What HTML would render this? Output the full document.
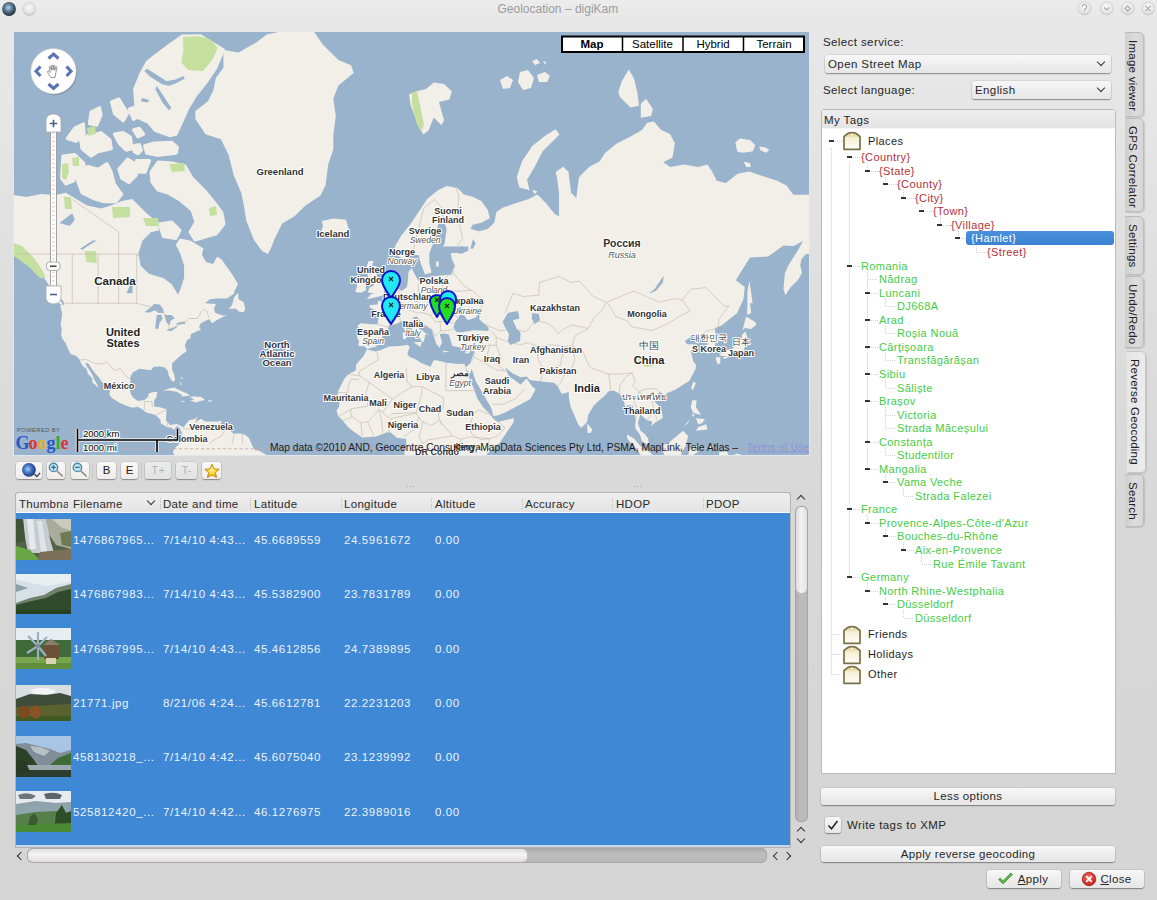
<!DOCTYPE html>
<html><head><meta charset="utf-8">
<style>
*{margin:0;padding:0;box-sizing:border-box}
html,body{width:1157px;height:900px;overflow:hidden}
body{position:relative;font-family:"Liberation Sans",sans-serif;font-size:11px;color:#222;
background:linear-gradient(180deg,#e8e8e8 0px,#e6e6e6 100px,#dedede 300px,#d8d8d8 500px,#d5d5d5 900px)}
.a{position:absolute}
.t{position:absolute;white-space:nowrap;line-height:14px;font-size:11.5px;color:#262626;letter-spacing:0.4px}
.btn{position:absolute;border-radius:3px;background:linear-gradient(#f7f7f7,#e6e6e6);box-shadow:0 1px 1.2px rgba(0,0,0,.38),0 0 0 0.5px rgba(0,0,0,.12);text-align:center;white-space:nowrap;color:#262626;font-size:11.5px;letter-spacing:0.35px}
.tbtn{position:absolute;top:462px;height:17px;border-radius:3px;background:linear-gradient(#faf8f7,#efeceb);box-shadow:0 1px 1.2px rgba(0,0,0,.35),0 0 0 0.5px rgba(0,0,0,.1);text-align:center;line-height:17px;font-size:11.5px}
.tab{position:absolute;left:1125px;width:19px;border:1px solid #bcbcbc;border-left:none;border-radius:0 5px 5px 0;background:linear-gradient(90deg,#cfcfcf,#dcdcdc 60%,#d6d6d6);box-shadow:1px 1px 1px rgba(0,0,0,.12)}
.tab span{position:absolute;left:15px;top:7px;letter-spacing:0.25px;white-space:nowrap;transform:rotate(90deg);transform-origin:0 0;font-size:11.5px;line-height:14px;color:#222}
.tt{position:absolute;white-space:nowrap;line-height:14px;font-size:11px;letter-spacing:0.4px}
.red{color:#b3303a}
.grn{color:#44cc44}
.sel{border-radius:3px;background:linear-gradient(#4a90dc,#3a82d2)}
.vl{position:absolute;width:1px;background:repeating-linear-gradient(180deg,#d2d2d2 0 1px,transparent 1px 2px)}
.hl{position:absolute;height:1px;background:repeating-linear-gradient(90deg,#d2d2d2 0 1px,transparent 1px 2px)}
.dash{position:absolute;width:5px;height:2px;background:#333}
.cell{position:absolute;color:#eef3fa;white-space:nowrap;line-height:14px;font-size:11.5px;letter-spacing:0.62px}
.th{position:absolute;top:497px;line-height:14px;white-space:nowrap;color:#2a2a2a;font-size:11.5px;letter-spacing:0.3px}
.sep{position:absolute;top:498px;width:1px;height:12px;background:repeating-linear-gradient(180deg,#bdbdbd 0 1px,transparent 1px 2px)}
.arrow{position:absolute;width:6px;height:6px;border-left:1.6px solid #333;border-bottom:1.6px solid #333}
.th1{background:linear-gradient(90deg,#5d6d55 0%,#9aa2a0 15%,#d8dcdc 30%,#7d8a84 45%,#c9cfcc 55%,#6b7a60 70%,#b5bbb0 85%,#4b5a40 100%)}
.th1::after{content:"";position:absolute;left:0;bottom:0;width:100%;height:30%;background:linear-gradient(90deg,#62a04a,#8fbf62 40%,#6b8a50 70%,#7d8d65)}
.th2{background:linear-gradient(180deg,#c9d6df 0%,#b5c6d0 35%,#8e9a8c 55%,#3f5a35 65%,#2e4a28 100%)}
.th3{background:linear-gradient(180deg,#e3edf2 0%,#e6eef0 25%,#4a7a48 30%,#557f4a 60%,#7fa25a 75%,#8db866 100%)}
.th3::after{content:"";position:absolute;left:26px;top:6px;width:16px;height:26px;background:linear-gradient(90deg,#7d8fa0,#a9b4be 40%,#6d5b42 55%,#8b6f4d)}
.th4{background:linear-gradient(180deg,#cfdbe6 0%,#e3e8ea 25%,#6f7a6a 40%,#3c4a36 60%,#7a6a3a 75%,#4e6a2a 100%)}
.th5{background:linear-gradient(180deg,#aac8e8 0%,#98b2cf 20%,#557360 40%,#2f5030 60%,#8aa0a8 78%,#3e5a3a 100%)}
.th6{background:linear-gradient(180deg,#f2f4f6 0%,#9aa0a8 20%,#c8ced2 30%,#7fa0b0 45%,#4f7a48 65%,#3d6e2e 100%)}
</style></head><body>
<!-- title bar -->
<div class="a" style="left:0;top:0;width:1157px;height:24px;background:linear-gradient(#ececec,#e7e7e7)"></div>
<svg class="a" style="left:0;top:0" width="40" height="20" viewBox="0 0 40 20">
<defs><radialGradient id="gi" cx="0.45" cy="0.4" r="0.6"><stop offset="0" stop-color="#b7d6ee"/><stop offset="0.45" stop-color="#5c7d98"/><stop offset="1" stop-color="#1c2a36"/></radialGradient>
<radialGradient id="gw" cx="0.5" cy="0.4" r="0.6"><stop offset="0" stop-color="#fafafa"/><stop offset="0.7" stop-color="#e2e2e2"/><stop offset="1" stop-color="#bdbdbd"/></radialGradient></defs>
<circle cx="9" cy="9" r="6.9" fill="url(#gi)"/>
<circle cx="29.2" cy="9" r="6.6" fill="url(#gw)" stroke="#cfcfcf" stroke-width="0.6"/>
</svg>
<div class="t" style="left:497.5px;top:2px;color:#9c9c9c;font-size:12px;letter-spacing:0">Geolocation – digiKam</div>
<svg class="a" style="left:1074px;top:0" width="83" height="20" viewBox="1074 0 83 20">
<g fill="url(#gw2)" stroke="#c9c9c9" stroke-width="0.7">
<defs><radialGradient id="gw2" cx="0.5" cy="0.35" r="0.65"><stop offset="0" stop-color="#fbfbfb"/><stop offset="0.75" stop-color="#e4e4e4"/><stop offset="1" stop-color="#c4c4c4"/></radialGradient></defs>
<circle cx="1084.4" cy="8.5" r="6.5"/><circle cx="1106.7" cy="8.5" r="6.5"/><circle cx="1127.7" cy="8.5" r="6.5"/><circle cx="1148.2" cy="8.5" r="6.5"/>
</g>
<g fill="none" stroke="#a5a5a5" stroke-width="1.1">
<path d="M1082.3,6.8a2.2,2.2 0 1 1 3,2c-0.8,0.4 -0.9,0.8 -0.9,1.6M1084.4,11.6v0.6"/>
<path d="M1104.2,7.5l2.5,2.5l2.5,-2.5"/>
<path d="M1127.7,5.8l2.6,2.7l-2.6,2.7l-2.6,-2.7z"/>
<path d="M1145.6,5.9l5.2,5.2M1150.8,5.9l-5.2,5.2"/>
</g>
</svg>

<!-- MAP -->
<div class="a" style="left:13px;top:31px;width:797px;height:425px;background:#dfe6ee"></div>
<div class="a" style="left:14px;top:32px;width:795px;height:423px;overflow:hidden;background:#99b3cc">
<svg id="map" width="795" height="423" viewBox="14 32 795 423" style="position:absolute;left:0;top:0">
<path fill="#f2efe9" stroke="#f2efe9" stroke-width="3" stroke-linejoin="round" d="M151.0,172.0L158.0,162.0L172.0,163.0L185.0,166.0L192.0,178.0L204.0,190.0L214.0,202.0L222.0,213.0L224.0,224.0L216.0,234.0L205.0,237.0L195.0,240.0L190.0,232.0L196.0,222.0L192.0,210.0L180.0,200.0L168.0,193.0L158.0,190.0L152.0,182.0Z M62.9,156.1L74.7,154.6L84.2,163.5L79.1,172.3L73.2,181.1L65.9,184.0L61.5,178.2Z M114.4,134.1L123.2,132.6L130.5,137.0L132.0,148.8L126.1,150.2L118.8,142.9Z M133.5,145.8L139.3,144.4L141.5,150.2L137.9,153.9L134.2,151.7Z M144.5,145.8L154.0,142.9L171.7,142.2L177.5,147.3L176.1,153.2L157.0,155.4L146.7,153.2Z M147.5,61.8L154.0,56.6L169.6,45.0L182.5,35.9L200.4,35.8L210.7,42.2L223.4,49.9L215.8,67.8L205.5,83.1L195.3,95.9L187.7,108.6L182.5,120.2L176.0,134.4L169.6,135.7L155.3,130.5L148.8,122.7L138.4,117.6L135.9,107.2L134.6,89.0L141.0,73.5Z M90.9,112.0L99.7,107.6L101.1,115.0L96.7,125.3L89.4,123.8Z M129.0,109.1L134.9,106.9L139.3,116.4L133.5,119.4Z M133.5,129.7L139.3,128.2L143.7,134.1L137.9,137.0Z M80.6,140.0L87.9,135.5L101.1,132.6L110.0,140.0L111.4,148.8L98.2,151.7L90.9,156.1L82.0,148.8Z M67.3,138.5L74.7,128.2L83.5,123.8L84.2,134.1L76.2,141.4Z M118.8,169.3L127.6,159.0L134.9,163.5L136.4,175.2L129.0,182.6L121.7,178.2Z M111.4,101.8L118.8,98.8L127.6,113.5L123.2,120.9L114.4,113.5Z M136.4,160.5L149.6,160.5L145.2,172.3L137.9,172.3Z M159.2,223.9L171.6,221.9L180.0,230.2L175.8,238.5L163.3,236.4Z M77.6,169.3L87.9,166.4L98.2,169.3L107.0,163.5L111.4,172.3L114.4,184.0L121.7,194.3L115.8,201.7L104.1,201.7L93.8,198.7L82.0,192.9L77.6,181.1Z"/>
<path fill="#f2efe9" d="M366.6,349.7L364.0,355.4L356.2,364.6L355.7,370.6L348.0,374.4L344.1,379.3L339.0,389.2L337.4,393.4L339.8,398.9L339.0,407.0L336.4,410.5L338.5,416.4L342.8,420.8L348.0,426.9L353.2,431.3L362.2,437.5L376.3,436.5L385.4,432.9L390.3,432.3L397.0,437.8L406.0,439.1L406.5,446.3L404.2,451.5L406.0,461.8L484.6,461.8L484.6,456.7L487.1,454.1L492.3,448.9L500.0,442.4L507.8,430.8L513.7,421.9L513.7,418.2L507.8,419.5L497.5,421.9L493.1,418.5L489.7,413.7L483.3,407.6L477.6,398.9L473.5,387.8L469.1,377.9L465.2,367.6L464.7,363.7L458.8,364.0L445.9,362.8L442.1,361.6L434.3,360.0L433.0,361.6L430.5,366.7L421.4,363.1L415.0,359.1L409.8,357.0L407.3,353.9L409.8,346.2L406.8,344.9L399.5,345.9L389.2,346.5L378.9,350.7L375.1,351.6L367.8,349.4Z M180.0,377.0L183.1,377.9L182.3,379.3Z M180.5,381.6L181.8,385.0L180.0,384.2Z M662.4,445.0L667.5,443.7L675.3,437.3L683.0,430.8L688.1,436.0L685.6,446.3L683.0,450.2L680.4,456.7L664.9,456.7L662.4,450.2Z M403.7,327.7L406.0,325.6L406.2,328.8L405.2,331.2Z M442.1,350.4L449.3,351.3L444.6,352.6Z M162.7,390.9L168.9,388.4L174.1,387.5L181.8,391.2L187.0,393.4L190.3,395.6L182.6,396.4L181.0,394.2L176.6,391.7L171.5,390.9L167.6,390.6Z M464.7,352.0L470.7,350.1L469.1,353.5L465.2,353.2Z M367.1,349.1L364.8,346.2L358.6,345.9L358.8,340.3L357.0,337.7L358.8,329.1L357.5,325.6L360.9,323.2L371.2,324.2L377.6,324.2L378.4,318.5L378.4,314.0L375.1,310.3L369.4,307.2L369.9,304.9L377.6,304.5L378.2,300.5L382.0,301.7L385.4,298.9L386.1,295.3L389.7,293.6L393.1,289.0L394.4,286.0L401.7,291.0L407.0,287.0L407.8,281.0L408.5,272.0L411.5,268.0L414.5,274.0L418.6,281.0L420.8,278.8L432.0,276.5L451.0,274.5L455.0,266.0L451.5,258.0L451.0,253.0L462.0,252.9L468.3,251.0L468.3,246.4L455.0,246.4L442.4,246.4L444.5,244.3L446.7,229.1L444.5,222.7L442.4,220.5L438.0,224.8L433.7,242.1L429.4,252.9L429.4,263.7L431.6,272.4L425.1,274.5L420.8,263.7L418.6,255.1L412.1,255.1L403.5,259.4L397.0,255.1L394.8,246.4L401.3,235.6L410.0,224.8L418.6,211.9L427.2,198.9L438.0,190.3L446.7,185.9L457.5,188.1L464.0,194.6L472.6,196.7L481.3,201.1L487.7,209.7L489.9,218.3L481.3,222.7L472.6,224.8L470.4,229.1L479.1,231.3L487.7,229.1L494.2,222.7L496.4,211.9L502.9,207.5L515.8,203.2L528.8,198.9L537.4,194.6L546.1,203.2L554.7,214.0L559.0,216.2L559.0,192.4L556.9,177.3L555.6,172.0L563.3,166.8L568.5,172.0L571.1,192.7L576.3,197.9L578.9,177.2L589.3,166.8L599.6,161.6L605.0,153.0L616.7,143.6L630.7,136.6L642.3,129.7L647.0,122.7L653.9,121.5L660.9,129.7L670.2,134.3L674.9,143.6L672.5,157.6L663.2,162.2L670.2,166.9L684.2,164.5L698.1,166.9L707.4,164.5L712.1,171.5L716.7,180.8L726.0,183.1L737.6,173.8L749.3,171.5L763.2,176.2L777.2,180.8L786.5,185.5L793.4,194.8L815.0,194.8L819.6,195.1L819.6,254.0L805.9,254.0L801.5,259.1L800.2,265.0L802.0,273.0L797.7,280.3L790.2,287.7L785.3,295.3L783.5,289.0L784.8,273.5L788.6,265.0L798.9,248.7L802.8,241.1L793.8,246.1L783.5,245.5L768.0,256.6L750.0,257.6L735.8,280.3L744.8,286.9L743.5,299.3L737.1,312.9L721.6,325.6L715.2,328.1L715.2,345.9L714.7,351.6L711.3,352.3L706.9,353.9L707.5,344.3L703.6,337.7L694.6,339.3L695.9,334.3L688.1,338.7L684.8,341.0L686.9,344.3L697.2,344.6L690.7,350.7L693.3,361.6L695.9,364.6L695.9,368.2L689.4,380.7L675.3,389.8L666.2,393.4L664.9,395.3L659.8,392.0L654.6,396.2L653.4,400.3L661.1,408.4L662.9,417.7L654.6,422.9L651.5,426.3L652.1,421.6L646.9,420.3L641.8,415.8L640.5,413.7L637.9,422.9L640.5,430.8L644.3,433.4L648.2,438.6L649.0,445.5L641.8,441.1L640.0,434.7L635.3,428.2L635.3,417.7L632.7,405.7L628.9,404.9L625.0,407.0L623.7,398.9L619.3,393.4L613.4,390.6L608.3,391.5L605.2,395.3L598.0,401.6L593.6,405.7L588.2,415.0L587.1,422.1L581.2,427.9L578.1,424.2L574.8,416.4L570.9,407.6L569.1,398.9L568.6,392.0L561.9,394.0L559.3,389.5L558.0,386.4L554.1,382.7L541.3,381.6L529.7,379.9L526.6,376.4L520.6,377.3L512.9,373.5L505.2,367.6L509.1,376.4L513.4,379.3L520.6,384.4L526.6,378.4L532.2,386.4L535.6,389.2L530.4,398.9L520.6,404.3L505.2,412.4L497.5,415.6L493.3,416.1L491.5,408.4L482.0,392.0L475.6,380.7L471.7,369.1L469.9,374.1L465.2,367.6L469.9,363.7L471.7,359.1L473.7,353.9L474.0,346.9L469.1,348.1L460.1,347.5L452.4,345.9L449.8,337.7L448.5,334.0L456.2,331.9L461.4,332.2L474.3,330.2L488.4,330.9L488.7,327.4L484.6,323.9L479.4,319.5L479.4,312.9L475.6,317.4L467.8,320.3L465.2,316.6L460.9,312.9L458.0,318.5L455.2,322.1L453.4,327.4L456.2,331.9L449.8,334.3L443.3,333.6L439.7,334.3L442.1,342.6L439.5,347.8L436.1,343.6L434.3,337.7L431.7,329.8L422.7,323.9L416.8,316.6L413.2,317.4L413.7,322.1L417.6,327.4L422.7,330.9L429.2,335.7L425.3,334.3L424.0,341.0L422.0,342.6L417.6,333.3L412.4,329.8L408.6,325.6L404.2,320.6L394.4,324.6L389.2,324.9L386.7,331.6L381.5,337.7L380.2,341.0L376.3,346.5Z M366.8,299.3L372.5,298.1L378.9,296.5L385.1,294.4L383.8,291.9L385.9,288.1L382.3,285.1L380.7,282.5L378.4,279.9L376.3,274.0L373.8,273.5L376.9,266.4L371.7,266.0L373.8,261.1L368.6,261.1L366.6,266.4L367.1,272.6L368.1,276.7L369.6,278.1L373.3,279.0L373.8,285.6L369.4,287.7L367.8,292.4L373.8,293.2L370.4,294.8Z M661.6,397.5L666.2,395.9L667.5,397.5L663.7,401.1Z M710.0,443.2L712.6,446.3L711.3,450.2L710.0,447.6Z M189.5,396.7L194.7,396.4L201.1,397.0L205.2,400.0L199.8,401.1L196.7,402.4L189.8,400.8L194.2,399.7Z M742.3,330.9L746.1,316.6L755.1,322.1L756.4,324.6L751.3,329.1L744.8,328.1Z M719.1,354.5L724.2,350.7L731.9,349.1L735.8,345.9L741.0,341.0L742.3,334.3L745.6,331.6L747.4,337.7L744.8,342.6L744.3,349.1L742.3,352.3L739.7,352.9L734.0,353.5L729.9,356.0L721.6,356.0Z M366.0,290.3L365.8,284.3L367.3,279.4L365.5,276.7L362.7,276.7L360.1,277.2L355.7,281.6L357.0,286.0L355.2,291.9L360.9,292.8Z M179.7,400.5L185.1,401.6L183.1,402.2Z M716.0,357.0L720.3,357.3L720.3,363.1L717.8,364.6L716.0,360.0Z M690.7,407.0L692.3,400.3L696.6,400.3L695.9,407.0L701.0,415.0L693.3,412.9Z M695.9,430.8L707.5,429.5L706.2,424.2L698.4,426.9Z M691.5,413.7L694.6,414.5L693.3,416.9Z M10.0,194.9L14.0,194.9L26.4,197.0L41.0,193.9L55.5,194.9L65.9,192.8L76.2,199.0L86.6,205.3L101.1,208.4L111.5,205.3L121.9,201.1L132.2,199.0L138.5,205.3L146.8,213.6L157.1,221.9L159.2,230.2L150.9,232.2L142.6,240.5L138.5,253.0L140.5,265.4L148.8,273.7L163.3,277.9L171.6,284.1L177.9,294.5L180.0,290.3L184.1,277.9L184.1,265.4L180.0,253.0L175.8,244.7L180.0,238.5L190.3,240.5L200.7,246.7L211.1,253.0L221.4,259.2L231.8,273.7L238.0,284.0L234.0,292.0L234.6,293.2L226.9,298.5L216.6,298.5L210.1,299.3L204.7,303.3L215.8,304.1L214.0,309.1L215.3,312.9L223.0,315.5L226.9,315.1L217.9,319.5L211.9,323.2L209.4,319.2L205.0,321.0L200.6,323.5L199.1,327.4L201.1,329.8L196.5,331.6L190.8,334.3L190.3,338.3L187.0,340.0L184.9,345.6L186.7,351.3L181.8,354.5L177.9,357.9L172.3,363.1L172.0,369.1L174.3,375.0L175.1,379.6L173.6,381.9L171.2,379.9L168.4,374.7L168.1,371.2L165.0,367.6L159.9,366.4L153.5,366.7L151.1,370.3L147.0,369.7L139.3,368.8L132.8,372.6L130.5,376.4L130.3,382.2L129.7,389.2L131.0,394.5L133.9,398.3L138.0,401.1L144.4,400.0L148.3,396.7L148.6,393.4L153.5,392.0L157.3,392.0L156.3,397.5L154.2,400.3L154.0,406.5L159.9,407.3L166.6,409.2L166.1,416.4L165.8,420.3L170.2,425.0L176.6,424.0L182.1,426.6L183.6,427.4L186.7,422.9L189.5,420.0L193.9,419.3L197.5,416.6L196.2,419.8L197.0,421.9L198.5,420.3L201.1,418.7L205.0,421.4L210.1,421.4L216.1,421.4L222.0,421.1L220.4,424.0L224.8,427.1L228.2,429.2L233.3,433.4L239.5,433.6L244.9,434.7L248.8,437.8L251.4,443.7L252.7,446.8L255.2,450.2L259.1,450.7L266.8,455.1L273.3,456.1L283.6,458.7L291.3,463.1L291.3,474.9L170.2,474.9L174.1,455.4L173.0,451.5L175.4,447.4L178.2,445.0L181.8,439.6L182.3,433.9L180.8,430.3L179.5,427.4L176.4,426.1L174.3,430.0L171.0,427.6L167.6,427.4L160.7,423.2L160.4,419.8L156.0,415.3L152.2,414.0L146.0,412.6L141.9,408.9L137.5,406.8L132.8,407.8L127.7,406.2L120.0,403.0L112.2,398.3L109.4,395.1L109.9,390.6L106.3,386.1L101.4,381.3L98.6,377.0L95.5,373.8L91.4,368.2L88.5,363.7L85.7,362.5L86.5,366.1L89.8,370.6L92.9,375.8L94.4,379.9L97.3,384.4L98.3,388.1L95.0,384.4L92.6,382.7L92.1,377.9L87.7,373.5L86.7,369.1L82.8,366.1L80.5,362.2L79.5,359.4L76.4,356.0L70.7,353.9L67.4,347.5L65.8,343.3L62.7,339.3L61.2,335.0L61.7,329.1L60.7,323.9L62.2,314.0L60.2,305.6L64.3,304.9L63.3,300.9L59.1,298.1L53.0,294.0L51.2,288.6L46.5,281.6L43.9,278.1L40.1,271.2L36.5,264.0L31.3,259.1L26.2,261.1L21.3,255.5L18.2,254.0L7.9,254.0L7.9,195.1Z M228.7,308.7L232.0,305.3L234.1,297.3L238.2,292.8L238.5,299.3L243.6,302.1L245.4,309.1L243.4,312.2L238.5,311.4L236.4,308.7Z M719.1,452.3L726.8,451.2L729.4,456.7L737.1,453.6L744.8,455.6L755.1,460.5L768.0,461.8L768.0,461.8L719.1,461.8Z M683.5,426.9L689.4,419.5L688.1,422.9Z M208.3,400.3L212.5,400.5L211.9,401.6L208.3,401.6Z M747.4,314.8L751.3,312.9L750.0,303.3L752.6,303.3L749.5,280.8L747.4,291.1L747.4,303.3L747.1,312.9Z M402.6,332.6L406.8,332.6L406.2,339.0L403.1,339.3Z M722.9,357.6L728.6,355.4L727.3,357.9L724.2,359.1Z M413.5,342.3L421.7,341.7L420.4,346.9Z M587.1,423.5L592.5,429.5L590.7,432.9L587.6,432.9Z M689.4,448.9L692.0,446.3L703.6,445.0L693.3,447.6L698.4,451.5L694.6,454.1L690.7,456.7L688.1,456.7Z M627.1,434.4L634.0,438.6L640.5,446.3L649.0,451.5L654.6,456.7L641.8,456.7L636.6,448.9L627.1,438.6Z M691.2,387.8L693.3,381.6L695.9,382.7L692.8,390.6Z M532.2,189.8L537.4,191.3L534.8,194.3Z M50.9,296.1L59.4,299.3L63.5,305.6L59.9,304.1L54.2,299.3Z M695.9,418.2L704.9,419.0L702.3,422.9L698.4,424.2Z M500.0,80.0L507.0,76.0L513.0,80.0L510.0,88.0L503.0,89.0Z M520.0,72.0L528.0,70.0L534.0,78.0L531.0,88.0L523.0,90.0L518.0,82.0Z M537.0,75.0L545.0,72.0L550.0,76.0L547.0,82.0L539.0,82.0Z M532.0,61.0L537.0,59.0L540.0,63.0L535.0,65.0Z M543.0,61.0L546.0,62.0L545.0,65.0Z M436.0,262.0L438.5,261.0L438.5,267.0L436.0,266.0Z M223.4,49.9L238.7,52.4L256.6,42.2L266.8,34.6L287.3,30.0L312.8,30.0L323.0,44.8L338.4,60.1L351.1,65.2L353.7,72.9L338.4,85.6L333.3,98.4L335.8,116.3L333.3,134.2L333.3,149.5L328.1,164.8L325.6,185.3L320.5,195.5L305.2,205.7L294.9,215.9L282.2,223.6L275.0,238.0L271.0,248.0L268.0,254.0L262.0,251.0L254.0,240.0L246.4,221.0L243.9,205.7L241.3,192.9L233.6,175.0L228.5,154.6L220.9,139.3L205.5,134.2L195.3,118.8L195.3,111.2L208.1,101.0L213.2,90.7L215.8,78.0L223.4,67.8L223.4,57.5Z M321.8,221.0L333.3,218.5L346.0,219.7L348.6,228.7L343.5,236.3L328.1,237.6L320.5,233.8L323.0,226.1Z M516.7,177.2L521.9,161.6L532.2,146.1L545.2,135.7L555.6,129.2L559.5,134.4L553.0,140.9L542.6,151.3L534.8,166.8L527.0,179.8L529.6,190.2L519.3,187.6Z M735.3,142.5L739.8,138.6L750.1,139.9L755.3,145.1L752.7,151.5L742.4,152.8L737.3,151.5Z M759.2,146.4L765.6,147.6L769.5,150.2L765.6,152.8L760.5,150.2Z M743.7,161.8L750.1,163.1L750.8,167.0L746.3,167.0Z M618.3,91.9L621.7,81.5L628.7,69.4L633.8,78.0L637.3,91.9L639.0,105.7L630.4,107.4L620.0,97.0Z M640.8,104.0L646.0,98.8L652.9,109.1L651.1,116.1L640.8,117.8Z M409.1,94.2L415.6,91.6L425.9,89.0L433.7,82.6L444.1,83.9L451.9,91.6L449.3,99.4L438.9,102.0L444.1,120.2L441.5,125.3L433.7,117.6L428.5,130.5L423.3,134.4L418.2,125.3L410.4,104.6Z"/>
<path fill="#99b3cc" d="M532.2,312.9L538.7,314.0L540.0,320.3L534.8,323.9L531.7,318.5Z M649.5,292.8L654.6,289.0L663.7,275.8L662.9,282.5L655.9,291.1L650.0,293.2Z M502.6,322.1L507.8,312.9L518.1,311.0L519.4,318.5L512.9,320.3L516.8,329.1L520.6,332.6L520.1,341.0L510.3,344.9L507.8,341.0L509.1,334.3L505.2,327.4Z M166.6,330.2L172.8,328.1L177.9,326.0L176.6,327.4L171.5,330.9L167.6,330.9Z M59.4,222.9L72.3,213.2L74.9,219.7L69.7,225.9Z M80.0,248.7L92.9,240.6L96.8,240.6L87.7,246.1L82.6,249.8Z M163.8,315.1L171.5,315.1L174.8,318.5L171.0,320.3L169.4,325.6L166.3,322.1L165.0,317.0Z M458.8,254.0L461.4,246.1L466.5,248.7L464.0,253.0Z M155.3,329.1L156.0,320.3L156.8,315.1L161.2,314.8L162.5,318.5L159.1,323.9L158.6,328.4Z M470.4,248.7L473.0,238.9L475.6,243.3L473.0,248.7Z M175.9,324.6L185.1,323.9L184.9,321.4L180.5,322.1L176.6,323.2Z M144.2,312.2L150.9,307.2L154.0,304.1L159.9,304.5L163.0,309.1L163.8,312.9L158.6,312.9L154.7,310.3L149.6,312.5Z M126.4,293.2L130.3,284.7L129.0,282.5L132.8,283.4L132.3,293.2Z M203,249L213,247.5L217.5,256L213,264L206,262L202,255Z M146.9,68.7L156.7,74.8L166.4,80.9L175,79.7L183.5,76L184.8,78.4L176.2,83.3L168.9,85.8L162.8,84.5L156.7,80.9L149.3,76L144.4,71.1Z M156.7,85.8L166.4,100.4L171.3,107.8L168.9,110.2L162.8,102.9L155.4,89.4Z M142,98L149,100L148,102.5L141,101.5Z"/>
<g fill="#c5df9f">
<path d="M182.9,36.9L198.2,36.3L210.4,39.3L217.8,47.9L212.9,58.9L203.1,71.1L188.4,69.9L181.1,62.6L183.5,50.3Z"/>
<path d="M62,164L68,163L69,172L66,180L62,178Z"/>
<path d="M72,158L79,157L79,166L73,166Z"/>
<path d="M169,164L184,163L185,171L172,172Z"/>
<path d="M112,207L130,207L130,217L113,218Z"/>
<path d="M143,218L158,218L159,226L146,226Z"/>
<path d="M64,197L71,197L72,209L65,209Z"/>
<path d="M85,251L96,251L97,263L86,262Z"/>
<path d="M14,243L22,246L34,258L42,270L46,278L40,278L28,266L14,256Z"/>
<path d="M412,92L417,92L420,105L424,125L421,132L416,122L412,104Z"/>
<path d="M637,359L650,360L654,366L645,367Z"/>
<path d="M87,128L95,126L96,134L88,136Z"/>
<path d="M209,208L216,206L217,215L210,216Z"/>
</g>
<g fill="none" stroke="#bdb6ab" stroke-width="0.7" opacity="0.85"><path d="M64.6,303.3L136.7,303.3L152.2,307.2L163.8,312.9L168.9,318.5L168.9,329.1L177.9,325.6L185.7,322.1L189.0,318.5L197.3,318.5L201.1,312.2L203.7,309.5L206.8,311.0L208.9,317.7 M79.8,360.0L85.9,359.4L95.5,363.7L102.7,363.7L107.1,362.2L112.2,368.5L116.1,370.6L120.0,368.2L125.1,375.0L131.0,379.6 M72.3,254.0L72.3,303.3 M98.1,254.0L98.1,303.3 M118.7,254.0L118.7,303.3 M136.7,254.0L136.7,303.3 M18.2,254.0L138.0,254.0 M118.7,254.0L118.7,231.9L72.3,199.4 M136.7,254.0L152.2,269.8 M144.4,409.7L144.4,401.6L152.2,401.6L152.2,407.0 M167.1,409.7L161.2,412.4L156.0,415.0 M167.6,426.9L167.6,420.3 M182.6,428.7L196.0,429.5L196.0,417.7 M226.9,426.9L221.7,436.0L216.6,438.6L208.9,443.7 M234.6,433.4L232.0,443.7 M242.4,434.7L242.4,443.7 M376.9,324.2L389.7,327.7 M387.9,294.8L392.3,299.7L397.5,301.3L402.6,303.3L401.1,308.7L397.0,314.0L399.5,316.6L400.8,322.8 M397.0,285.1L400.1,293.2L397.0,296.1L397.5,301.3 M403.7,278.5L406.0,279.0 M418.1,283.0L419.1,295.3L412.7,298.1L417.1,304.1L415.0,309.1L406.2,309.1 M442.1,281.6L443.3,291.1L440.0,302.9L430.5,301.3L425.3,304.5L420.2,303.3L412.7,298.1 M425.3,304.5L425.3,308.0L422.7,312.9L416.8,312.9L412.4,311.0L406.2,309.1 M422.7,312.9L430.5,315.1L440.3,307.2L448.5,307.2L454.2,314.8L458.0,317.4 M430.5,315.1L435.6,322.1L440.0,321.4L455.2,323.2 M440.0,321.4L440.8,330.9L450.0,330.2L453.7,329.1 M431.5,329.1L434.3,333.3L435.1,336.0L440.8,330.9 M422.7,323.9L431.5,329.1 M412.4,259.1L413.7,248.7L417.6,231.9L424.0,207.9L434.3,199.4 M443.3,221.0L442.3,207.9L434.3,199.4 M453.7,251.4L462.7,238.3L457.5,216.5L458.8,195.8L454.9,185.1 M452.4,266.4L453.7,273.5L464.0,286.0L471.7,290.3L484.6,300.9L479.9,309.9 M442.1,281.6L448.5,274.9L453.7,273.5 M443.3,291.1L461.4,291.1L471.7,290.3 M474.3,346.5L489.7,345.2L496.2,345.2L496.2,337.0L491.0,330.9 M484.6,323.9L500.0,330.9L507.8,329.8 M505.2,312.9L512.9,293.2L523.2,296.5L538.7,295.3L539.5,282.5L559.3,276.3L570.9,282.5L579.4,281.2L592.8,296.1L606.2,302.5 M606.2,302.5L618.6,297.3L634.0,291.1L649.5,298.1L659.8,302.1L675.3,298.5L682.2,300.1 M607.7,302.9L616.0,316.6L627.6,321.0L631.4,326.7L652.1,330.5L668.8,323.2L677.8,317.0L690.2,311.0L682.2,300.1 M682.2,300.1L690.7,289.0L706.2,287.7L724.2,306.0L728.9,306.0L719.1,318.8L718.0,327.7 M701.8,336.0L706.2,330.9L713.9,329.1L718.0,327.7 M707.5,343.3L713.9,341.0 M606.2,302.5L601.8,311.0L594.1,317.4L588.2,328.4L574.8,336.0L572.2,345.9L582.5,350.7L586.4,360.0L590.2,367.6L608.3,374.1L618.6,374.1L632.2,372.9L635.3,382.2L632.7,385.6L639.2,392.0L643.0,389.8L646.9,388.9L655.9,388.7L659.8,392.0 M516.8,329.8L525.8,331.6L536.1,319.9L538.7,321.4L547.7,323.2L551.6,326.0L558.0,333.6L564.5,328.4L572.2,324.9L588.2,328.4 M496.2,337.0L505.2,341.0L520.4,344.9L528.4,342.6L538.7,347.2L538.7,352.3L537.4,357.0L540.7,365.2L544.6,369.1L540.2,381.6 M538.7,347.2L549.0,344.9L556.7,345.2L565.7,346.5L572.2,345.9 M564.5,349.1L561.9,357.0L560.6,364.6L552.9,367.9L544.6,369.1 M572.2,345.9L574.8,360.0L572.2,367.6L564.5,373.5L561.9,380.7L558.0,385.9 M608.3,374.1L609.5,379.3L610.8,390.6 M619.3,393.4L619.9,385.0L626.3,376.4L632.2,372.9 M639.2,392.0L634.0,401.6L636.6,408.4L635.3,422.9 M639.2,392.0L652.1,401.6L654.6,412.4L657.2,420.3 M646.9,420.3L653.4,411.8L645.6,412.4L640.5,413.7 M482.0,361.6L496.2,370.0L504.4,370.6 M474.3,357.0L482.0,361.6L487.1,355.4L489.7,345.2 M492.3,404.3L502.6,404.3L515.5,398.9L524.5,388.7 M506.5,372.0L497.5,364.6L501.3,358.5L496.2,345.2 M376.9,352.3L378.4,360.0L372.5,363.1L359.1,371.5L359.1,375.6 M359.1,375.6L369.1,382.2L366.0,392.6L367.8,406.2L351.9,408.6L350.1,410.8 M348.0,374.4L359.1,375.6 M337.7,392.6L348.0,392.6L348.0,387.8L350.6,379.3L359.1,379.3 M406.0,367.0L407.3,382.2L412.4,386.4 M445.9,362.8L445.9,390.6 M445.9,390.6L476.6,390.6 M443.3,396.2L443.3,408.4L439.5,412.4L438.2,415.8L442.1,425.6 M422.5,386.7L443.3,397.5 M412.4,386.4L422.5,386.7L421.4,394.8L416.3,412.4L391.8,413.7L387.9,417.7L382.8,412.4L392.3,398.9L412.4,386.4 M392.3,398.9L369.1,382.2 M350.1,410.8L352.1,416.9L360.9,422.9L367.6,421.6L369.9,419.8L378.9,409.7L382.8,412.4 M388.5,432.3L390.8,418.5L416.5,413.2L418.9,417.7L412.4,430.8L403.7,436.5 M475.6,411.6L479.2,410.0L492.3,415.8L505.2,428.2L497.5,436.0L489.7,438.6L480.7,439.6L472.5,434.7L469.1,426.9L473.2,415.8L475.6,411.6 M418.9,417.7L422.7,421.6L430.5,425.6L439.5,420.6L452.4,436.0L461.4,439.3L469.1,437.0L489.5,438.6 M422.7,421.6L421.4,429.5L418.9,436.0L422.7,443.7L427.9,439.9L452.4,436.0 M487.1,453.3L489.5,438.6 M457.5,452.8L461.4,439.3 M360.9,422.9L362.2,436.0 M367.6,421.6L373.8,436.0 M378.9,409.7L381.5,420.3L382.8,432.9 M385.4,432.9L388.5,432.3 M351.9,408.6L339.0,416.4 M342.8,420.8L352.1,416.9 M469.9,363.7L473.0,358.5L474.3,357.0L474.0,346.9"/></g>
<g font-family="Liberation Sans, sans-serif" text-anchor="middle" stroke="#fff" stroke-width="2" stroke-linejoin="round" paint-order="stroke" fill="#222">
<text x="280" y="175" font-size="9.5" font-weight="bold" fill="#333">Greenland</text>
<text x="333" y="237" font-size="9.5" font-weight="bold" fill="#333">Iceland</text>
<text x="115" y="285" font-size="11.5" font-weight="bold">Canada</text>
<text x="123" y="336" font-size="11" font-weight="bold">United</text>
<text x="123" y="347" font-size="11" font-weight="bold">States</text>
<text x="119" y="389" font-size="9" font-weight="bold" fill="#333">México</text>
<text x="277" y="348" font-size="9.5" font-weight="bold" fill="#334">North</text>
<text x="277" y="357" font-size="9.5" font-weight="bold" fill="#334">Atlantic</text>
<text x="277" y="366" font-size="9.5" font-weight="bold" fill="#334">Ocean</text>
<text x="448" y="214" font-size="9" font-weight="bold" fill="#333">Suomi</text>
<text x="448" y="223" font-size="9" font-weight="bold" fill="#333">Finland</text>
<text x="425" y="234" font-size="9" font-weight="bold" fill="#333">Sverige</text>
<text x="425" y="243" font-size="8.5" font-style="italic" fill="#555">Sweden</text>
<text x="402" y="255" font-size="9" font-weight="bold" fill="#333">Norge</text>
<text x="402" y="264" font-size="8.5" font-style="italic" fill="#555">Norway</text>
<text x="371" y="273" font-size="9" font-weight="bold" fill="#333">United</text>
<text x="370" y="283" font-size="9" font-weight="bold" fill="#333">Kingdom</text>
<text x="410" y="300" font-size="9" font-weight="bold" fill="#333">Deutschland</text>
<text x="410" y="309" font-size="8.5" font-style="italic" fill="#555">Germany</text>
<text x="434" y="284" font-size="9" font-weight="bold" fill="#333">Polska</text>
<text x="434" y="293" font-size="8.5" font-style="italic" fill="#555">Poland</text>
<text x="386" y="317" font-size="9" font-weight="bold" fill="#333">France</text>
<text x="373" y="335" font-size="9" font-weight="bold" fill="#333">España</text>
<text x="373" y="344" font-size="8.5" font-style="italic" fill="#555">Spain</text>
<text x="413" y="327" font-size="9" font-weight="bold" fill="#333">Italia</text>
<text x="413" y="336" font-size="8.5" font-style="italic" fill="#555">Italy</text>
<text x="467" y="304" font-size="9" font-weight="bold" fill="#333">Україна</text>
<text x="467" y="314" font-size="8.5" font-style="italic" fill="#555">Ukraine</text>
<text x="473" y="341" font-size="9" font-weight="bold" fill="#333">Türkiye</text>
<text x="473" y="350" font-size="8.5" font-style="italic" fill="#555">Turkey</text>
<text x="622" y="247" font-size="10.5" font-weight="bold" fill="#333">Россия</text>
<text x="622" y="258" font-size="9" font-style="italic" fill="#555">Russia</text>
<text x="555" y="311" font-size="9" font-weight="bold" fill="#333">Kazakhstan</text>
<text x="647" y="317" font-size="9" font-weight="bold" fill="#333">Mongolia</text>
<text x="649" y="349" font-size="10" fill="#444">中国</text>
<text x="649" y="364" font-size="11" font-weight="bold" fill="#222">China</text>
<text x="709" y="341" font-size="8.5" fill="#444">대한민국</text>
<text x="709" y="352" font-size="9" font-weight="bold" fill="#333">S Korea</text>
<text x="741" y="345" font-size="8.5" fill="#444">日本</text>
<text x="741" y="356" font-size="9" font-weight="bold" fill="#333">Japan</text>
<text x="389" y="378" font-size="9" font-weight="bold" fill="#333">Algeria</text>
<text x="428" y="380" font-size="9" font-weight="bold" fill="#333">Libya</text>
<text x="460" y="376" font-size="9" font-weight="bold" fill="#333">مصر</text>
<text x="460" y="386" font-size="8.5" font-style="italic" fill="#555">Egypt</text>
<text x="492" y="362" font-size="9" font-weight="bold" fill="#333">Iraq</text>
<text x="521" y="363" font-size="9" font-weight="bold" fill="#333">Iran</text>
<text x="556" y="353" font-size="9" font-weight="bold" fill="#333">Afghanistan</text>
<text x="558" y="374" font-size="9" font-weight="bold" fill="#333">Pakistan</text>
<text x="497" y="384" font-size="9" font-weight="bold" fill="#333">Saudi</text>
<text x="497" y="394" font-size="9" font-weight="bold" fill="#333">Arabia</text>
<text x="587" y="392" font-size="11" font-weight="bold" fill="#222">India</text>
<text x="644" y="400" font-size="8.5" fill="#444">ประเทศไทย</text>
<text x="642" y="414" font-size="9" font-weight="bold" fill="#333">Thailand</text>
<text x="346" y="401" font-size="9" font-weight="bold" fill="#333">Mauritania</text>
<text x="378" y="406" font-size="9" font-weight="bold" fill="#333">Mali</text>
<text x="405" y="408" font-size="9" font-weight="bold" fill="#333">Niger</text>
<text x="430" y="412" font-size="9" font-weight="bold" fill="#333">Chad</text>
<text x="460" y="416" font-size="9" font-weight="bold" fill="#333">Sudan</text>
<text x="403" y="428" font-size="9" font-weight="bold" fill="#333">Nigeria</text>
<text x="483" y="430" font-size="9" font-weight="bold" fill="#333">Ethiopia</text>
<text x="211" y="430" font-size="9" font-weight="bold" fill="#333">Venezuela</text>
<text x="187" y="441.5" font-size="9" font-weight="bold" fill="#333">Colombia</text>
<text x="437" y="455" font-size="9" font-weight="bold" fill="#333">DR Congo</text>
<text x="467" y="450" font-size="9" font-weight="bold" fill="#333">Kenya</text>
</g>
<path d="M14,448.8H809" stroke="#c9a9a9" stroke-width="0.9" stroke-dasharray="3,2.5"/>
<!-- markers -->
<g stroke="#0a14c8" stroke-width="2" stroke-linejoin="round">
<path fill="#21e8f5" d="M391,298 C386,290 382,286 382,280 A9,9 0 0 1 400,280 C400,286 396,290 391,298Z"/>
<path fill="#21e8f5" d="M391,324 C386,316 382,312 382,306 A9,9 0 0 1 400,306 C400,312 396,316 391,324Z"/>
<path fill="#22dd22" d="M437,317 C432,309 430,305 430,300 A7.5,7.5 0 0 1 444,300 C444,305 442,309 437,317Z"/>
<path fill="#21e8f5" d="M448,318 C443,310 440,306 440,299 A8,8 0 0 1 456,299 C456,306 453,310 448,318Z"/>
<path fill="#22dd22" d="M447,324 C442,316 439,312 439,306 A8,8 0 0 1 455,306 C455,312 452,316 447,324Z"/>
</g>
<g stroke="#222" stroke-width="1.1">
<path d="M389,277L393,281M393,277L389,281"/>
<path d="M389,303L393,307M393,303L389,307"/>
<path d="M435,298L439,302M439,298L435,302"/>
<path d="M445,304L449,308M449,304L445,308"/>
</g>
<!-- map type buttons -->
<g font-family="Liberation Sans, sans-serif" font-size="11.5" text-anchor="middle" fill="#000">
<rect x="562" y="36.5" width="242" height="15.5" fill="#fff" stroke="#000" stroke-width="2"/>
<path d="M622.5,36.5V52M683,36.5V52M743.5,36.5V52" stroke="#000" stroke-width="1.5"/>
<text x="592" y="48" font-weight="bold">Map</text>
<text x="652.5" y="48">Satellite</text>
<text x="713" y="48">Hybrid</text>
<text x="774" y="48">Terrain</text>
</g>
<!-- pan control -->
<circle cx="54.5" cy="72.5" r="22.7" fill="#000" opacity="0.18"/>
<circle cx="53.5" cy="71.3" r="22.7" fill="#fff" stroke="#c8c8c8" stroke-width="0.6"/>
<g fill="none" stroke="#5d74b2" stroke-width="3.1" stroke-linejoin="miter">
<path d="M48.5,58.5L53.5,54L58.5,58.5"/>
<path d="M48.5,84L53.5,88.5L58.5,84"/>
<path d="M40.5,66.5L36,71.3L40.5,76"/>
<path d="M66.5,66.5L71,71.3L66.5,76"/>
</g>
<path d="M51,77.5C49.5,75.5 48,73.5 47.6,71.8C47.4,71 48.4,70.6 49,71.3L50.2,72.6L49.3,67.4C49.1,66.5 50.3,66.1 50.6,67L51.6,70.3L51.3,65.8C51.3,64.9 52.6,64.8 52.7,65.7L53.2,70L53.6,65.9C53.7,65 54.9,65.1 54.9,66L54.7,70.3L55.7,67.2C56,66.4 57.1,66.7 56.9,67.6L55.9,72.5C55.6,74.5 55.5,76 55,77.5Z" fill="#fff" stroke="#555" stroke-width="0.6"/>
<!-- zoom slider -->
<rect x="50.5" y="131" width="6" height="158" fill="#fff" stroke="#9a9a9a" stroke-width="0.9"/>
<path d="M52.5,133.0h2M52.5,137.3h2M52.5,141.7h2M52.5,146.1h2M52.5,150.4h2M52.5,154.8h2M52.5,159.1h2M52.5,163.4h2M52.5,167.8h2M52.5,172.2h2M52.5,176.5h2M52.5,180.8h2M52.5,185.2h2M52.5,189.6h2M52.5,193.9h2M52.5,198.2h2M52.5,202.6h2M52.5,206.9h2M52.5,211.3h2M52.5,215.6h2M52.5,220.0h2M52.5,224.3h2M52.5,228.7h2M52.5,233.1h2M52.5,237.4h2M52.5,241.8h2M52.5,246.1h2M52.5,250.4h2M52.5,254.8h2M52.5,259.1h2M52.5,263.5h2M52.5,267.9h2M52.5,272.2h2M52.5,276.5h2M52.5,280.9h2M52.5,285.2h2" stroke="#b0b0b0" stroke-width="0.8"/>
<path d="M46,132V120A7.5,6 0 0 1 61,120V132Z" fill="#fff" stroke="#aaa" stroke-width="0.8"/>
<path d="M49.8,123.5h7.4M53.5,119.8v7.4" stroke="#4f5d80" stroke-width="1.6"/>
<rect x="46.5" y="262" width="13.5" height="8.5" rx="3" fill="#fff" stroke="#999" stroke-width="0.8"/>
<path d="M50,266.2h6.5" stroke="#444" stroke-width="1.5"/>
<path d="M46,286V298A7.5,6 0 0 0 61,298V286Z" fill="#fff" stroke="#aaa" stroke-width="0.8"/>
<path d="M50,294.5h7" stroke="#4f5d80" stroke-width="1.6"/>
<!-- google logo -->
<text x="17" y="432" font-family="Liberation Sans, sans-serif" font-size="5.8" fill="#555" letter-spacing="0.4">POWERED BY</text>
<g font-family="Liberation Serif, serif" font-size="18" font-weight="bold">
<text x="15.5" y="449" fill="#2a57c8">G</text><text x="28.5" y="449" fill="#d33">o</text><text x="37.5" y="449" fill="#e5b02a">o</text><text x="46.5" y="449" fill="#2a57c8">g</text><text x="55.5" y="449" fill="#3a3">l</text><text x="60.5" y="449" fill="#d33">e</text>
</g>
<!-- scale -->
<g stroke="#fff" stroke-width="3.5" opacity="0.8"><path d="M77.5,429V452M77.5,440H178M177.5,429V440M157,440V452"/></g>
<g stroke="#000" stroke-width="1.6"><path d="M77.5,429V452M77.5,440H178M177.5,429V440M157,440V452"/></g>
<g font-family="Liberation Sans, sans-serif" font-size="9.5" fill="#000" stroke="#fff" stroke-width="2" paint-order="stroke">
<text x="83" y="436.5">2000 km</text>
<text x="83" y="451">1000 mi</text>
<text x="270" y="450.5" font-size="10.5" textLength="468" lengthAdjust="spacingAndGlyphs" stroke="none" fill="#1a1a1a">Map data ©2010 AND, Geocentre Consulting, MapData Sciences Pty Ltd, PSMA, MapLink, Tele Atlas –</text>
<text x="747" y="450.5" font-size="10" textLength="62" stroke="none" fill="#8f92d8" text-decoration="underline">Terms of Use</text>
</g>

</svg>
</div>

<!-- toolbar -->
<div class="tbtn" style="left:16px;width:26px"></div>
<svg class="a" style="left:16px;top:460px" width="28" height="22" viewBox="16 460 28 22">
<defs><radialGradient id="glb" cx="0.42" cy="0.45" r="0.6"><stop offset="0" stop-color="#a9d0f5"/><stop offset="0.45" stop-color="#4a78c8"/><stop offset="1" stop-color="#13307a"/></radialGradient></defs>
<circle cx="28.9" cy="469.8" r="6.9" fill="url(#glb)"/>
<path d="M34.5,474l2.3,2.6l3.3,-3.8" fill="none" stroke="#333" stroke-width="1.2"/>
</svg>
<div class="tbtn" style="left:47px;width:18px"></div>
<div class="tbtn" style="left:71px;width:18px"></div>
<svg class="a" style="left:46px;top:460px" width="46" height="22" viewBox="46 460 46 22">
<g fill="#bfe0ee" stroke="#4b8aa8" stroke-width="1.4"><circle cx="53.5" cy="467.4" r="4.2"/><circle cx="77.4" cy="467.4" r="4.2"/></g>
<g stroke="#888" stroke-width="1.6" stroke-linecap="round"><path d="M57,471L62.3,476M80.9,471L86.2,476"/></g>
<g stroke="#2d6a8a" stroke-width="1.3"><path d="M51.3,467.4h4.4M53.5,465.2v4.4M75.2,467.4h4.4"/></g>
</svg>
<div class="a" style="left:92px;top:463px;width:1px;height:16px;background:#c8c8c8"></div>
<div class="tbtn" style="left:97px;width:19px;color:#222">B</div>
<div class="tbtn" style="left:121px;width:17px;color:#222">E</div>
<div class="a" style="left:141px;top:463px;width:1px;height:16px;background:#c8c8c8"></div>
<div class="tbtn" style="left:145px;width:26px;color:#b4b4b4;background:linear-gradient(#ececec,#e2e2e2)">T+</div>
<div class="tbtn" style="left:176px;width:21px;color:#b4b4b4;background:linear-gradient(#ececec,#e2e2e2)">T-</div>
<div class="tbtn" style="left:202px;width:19px"></div>
<svg class="a" style="left:202px;top:462px" width="20" height="18" viewBox="0 0 20 18">
<defs><radialGradient id="st" cx="0.5" cy="0.45" r="0.6"><stop offset="0" stop-color="#fff6a0"/><stop offset="0.6" stop-color="#f2c418"/><stop offset="1" stop-color="#d89a10"/></radialGradient></defs>
<path d="M10,2.2L12.2,6.8L17.2,7.3L13.4,10.6L14.6,15.5L10,13L5.4,15.5L6.6,10.6L2.8,7.3L7.8,6.8Z" fill="url(#st)" stroke="#b8860b" stroke-width="0.8" stroke-linejoin="round"/>
</svg>
<!-- splitter dots -->
<div class="a" style="left:407px;top:486px;width:7px;height:1px;background:repeating-linear-gradient(90deg,#aaa 0 1px,transparent 1px 3px)"></div>
<div class="a" style="left:634px;top:486px;width:7px;height:1px;background:repeating-linear-gradient(90deg,#aaa 0 1px,transparent 1px 3px)"></div>
<div class="a" style="left:813px;top:668px;width:1px;height:9px;background:repeating-linear-gradient(180deg,#bbb 0 1px,transparent 1px 3px)"></div>
<div class="a" style="left:1140px;top:486px;width:7px;height:1px;background:repeating-linear-gradient(90deg,#bbb 0 1px,transparent 1px 3px)"></div>

<!-- table -->
<div class="a" style="left:15px;top:492px;width:776px;height:356px;border:1px solid #b4b4b4;border-radius:3px 3px 0 0;background:#3e88d5;overflow:hidden;box-shadow:inset 0 -2px 0 #c6d8ee">
  <div class="a" style="left:0;top:0;width:776px;height:20px;background:linear-gradient(#eeeeee,#e4e4e4);border-bottom:1px solid #fbfbfb"></div>
</div>
<div class="th" style="left:19px;width:49px;overflow:hidden">Thumbna</div>
<div class="th" style="left:73px">Filename</div>
<div class="arrow" style="left:148px;top:498px;transform:rotate(-45deg)"></div>
<div class="th" style="left:163px">Date and time</div>
<div class="th" style="left:254px">Latitude</div>
<div class="th" style="left:344px">Longitude</div>
<div class="th" style="left:435px">Altitude</div>
<div class="th" style="left:525px">Accuracy</div>
<div class="th" style="left:616px">HDOP</div>
<div class="th" style="left:706px">PDOP</div>
<div class="sep" style="left:160px"></div><div class="sep" style="left:250px"></div><div class="sep" style="left:341px"></div>
<div class="sep" style="left:431px"></div><div class="sep" style="left:522px"></div><div class="sep" style="left:612px"></div><div class="sep" style="left:703px"></div>
<div class="cell" style="left:73px;top:533px">1476867965...</div>
<div class="cell" style="left:163px;top:533px">7/14/10 4:43...</div>
<div class="cell" style="left:254px;top:533px">45.6689559</div>
<div class="cell" style="left:344px;top:533px">24.5961672</div>
<div class="cell" style="left:435px;top:533px">0.00</div>
<svg class="a" style="left:16px;top:519px" width="55" height="41" viewBox="0 0 55 41" preserveAspectRatio="none"><rect width="55" height="41" fill="#55624a"/><path d="M30,0H55V30L40,26L32,14Z" fill="#a9ab9c"/><path d="M36,0H55V12L45,8Z" fill="#c9cabe"/><path d="M7,0H30L34,20L38,34H12L9,18Z" fill="#c7ccd0"/><path d="M11,0H17L20,30H14Z" fill="#e6eaee"/><path d="M21,2H26L31,33H25Z" fill="#dfe4e8"/><path d="M0,27L14,31L24,41H0Z" fill="#69a646"/><path d="M24,33L55,30V41H22Z" fill="#7d7058"/><path d="M0,0H7L9,22L0,24Z" fill="#3f5537"/><path d="M44,14L55,12V28L46,26Z" fill="#6d7a55"/></svg>
<div class="cell" style="left:73px;top:587px">1476867983...</div>
<div class="cell" style="left:163px;top:587px">7/14/10 4:43...</div>
<div class="cell" style="left:254px;top:587px">45.5382900</div>
<div class="cell" style="left:344px;top:587px">23.7831789</div>
<div class="cell" style="left:435px;top:587px">0.00</div>
<svg class="a" style="left:16px;top:574px" width="55" height="40" viewBox="0 0 55 40" preserveAspectRatio="none"><rect width="55" height="40" fill="#d6e0e6"/><path d="M0,0H55V8L30,12L0,6Z" fill="#e9eef1"/><path d="M0,10L12,14L0,18Z" fill="#8e9ea6"/><path d="M0,29L14,24L28,21L40,14L55,10V40H0Z" fill="#6f806c"/><path d="M0,31L16,27L30,24L42,18L55,15V40H0Z" fill="#2f4b2c"/><path d="M0,36H55V40H0Z" fill="#27401f"/></svg>
<div class="cell" style="left:73px;top:642px">1476867995...</div>
<div class="cell" style="left:163px;top:642px">7/14/10 4:43...</div>
<div class="cell" style="left:254px;top:642px">45.4612856</div>
<div class="cell" style="left:344px;top:642px">24.7389895</div>
<div class="cell" style="left:435px;top:642px">0.00</div>
<svg class="a" style="left:16px;top:628px" width="55" height="41" viewBox="0 0 55 41" preserveAspectRatio="none"><rect width="55" height="41" fill="#e6eef2"/><path d="M0,12H55V31H0Z" fill="#3f6a3a"/><path d="M0,29H55V41H0Z" fill="#78a64e"/><path d="M0,35H55V41H0Z" fill="#5f8f3c"/><path d="M28,17L35,13L43,17V31H28Z" fill="#6b5136"/><path d="M27,17L35,11L44,17Z" fill="#8b7f70"/><rect x="30" y="30" width="10" height="6" fill="#d9d2b4"/><g stroke="#9fb0c2" stroke-width="2.2"><path d="M22,18L22,4M22,18L31,9M22,18L12,8M22,18L11,25M22,18L30,28M22,18L22,32"/></g><circle cx="22" cy="18" r="2" fill="#7a8a9a"/></svg>
<div class="cell" style="left:73px;top:696px">21771.jpg</div>
<div class="cell" style="left:163px;top:696px">8/21/06 4:24...</div>
<div class="cell" style="left:254px;top:696px">45.6612781</div>
<div class="cell" style="left:344px;top:696px">22.2231203</div>
<div class="cell" style="left:435px;top:696px">0.00</div>
<svg class="a" style="left:16px;top:685px" width="55" height="36" viewBox="0 0 55 36" preserveAspectRatio="none"><rect width="55" height="36" fill="#d9dee1"/><path d="M14,5Q28,0 40,6L36,9L18,9Z" fill="#f2f3f4"/><path d="M0,14L14,9L30,10L44,8L55,11V26H0Z" fill="#3e4c3a"/><path d="M0,22L55,19V36H0Z" fill="#5a6330"/><path d="M0,31H55V36H0Z" fill="#3f5a22"/><ellipse cx="8" cy="27" rx="6" ry="6.5" fill="#7c4a20"/><ellipse cx="19.5" cy="27" rx="5.5" ry="6.5" fill="#8a5426"/></svg>
<div class="cell" style="left:73px;top:750px">458130218_...</div>
<div class="cell" style="left:163px;top:750px">7/14/10 4:42...</div>
<div class="cell" style="left:254px;top:750px">45.6075040</div>
<div class="cell" style="left:344px;top:750px">23.1239992</div>
<div class="cell" style="left:435px;top:750px">0.00</div>
<svg class="a" style="left:16px;top:736px" width="55" height="41" viewBox="0 0 55 41" preserveAspectRatio="none"><rect width="55" height="41" fill="#a9c5e4"/><path d="M0,8L10,7L22,10L34,13L44,17L55,14V30H0Z" fill="#7f8e98"/><path d="M14,10L24,11L34,15L28,20L18,16Z" fill="#b9c0c6"/><path d="M0,10L10,14L18,24L22,30H0Z" fill="#2b4229"/><path d="M33,30L42,22L55,17V30Z" fill="#3e6b36"/><path d="M0,29H55V35H0Z" fill="#9ea9af"/><path d="M0,34H55V41H0Z" fill="#2d3d2d"/><path d="M0,24L10,26L14,36L0,36Z" fill="#263a24"/></svg>
<div class="cell" style="left:73px;top:805px">525812420_...</div>
<div class="cell" style="left:163px;top:805px">7/14/10 4:42...</div>
<div class="cell" style="left:254px;top:805px">46.1276975</div>
<div class="cell" style="left:344px;top:805px">22.3989016</div>
<div class="cell" style="left:435px;top:805px">0.00</div>
<svg class="a" style="left:16px;top:791px" width="55" height="41" viewBox="0 0 55 41" preserveAspectRatio="none"><rect width="55" height="41" fill="#8fa1aa"/><path d="M0,0H55V11L40,12L20,10L0,13Z" fill="#e7eaee"/><path d="M2,4Q12,0 20,5L16,8L4,8Z" fill="#6f757d"/><path d="M28,3Q38,0 46,4L44,8L30,8Z" fill="#5f656d"/><path d="M0,15L55,13V22L0,25Z" fill="#8fa4ac"/><path d="M0,24L20,21L40,20L55,22V41H0Z" fill="#55804a"/><path d="M40,22L46,14L50,22L55,20V41H38Z" fill="#2e4e2a"/><path d="M0,34L55,32V41H0Z" fill="#4a8a34"/><path d="M14,26L18,22L22,28L20,34H12Z" fill="#3a5a30"/></svg>
<!-- v scrollbar -->
<div class="arrow" style="left:798px;top:496px;transform:rotate(135deg)"></div>
<div class="a" style="left:795px;top:506px;width:13px;height:316px;border-radius:6px;background:linear-gradient(90deg,#a9a9a9,#bdbdbd 40%,#b9b9b9);box-shadow:inset 0 0 0 1px #a5a5a5"></div>
<div class="a" style="left:796px;top:507px;width:11px;height:86px;border-radius:5px;background:linear-gradient(90deg,#dcdcdc,#f3f1f1 45%,#e2e0e0)"></div>
<div class="arrow" style="left:798px;top:828px;transform:rotate(135deg)"></div>
<div class="arrow" style="left:798px;top:836px;transform:rotate(-45deg)"></div>
<!-- h scrollbar -->
<div class="arrow" style="left:18px;top:853px;transform:rotate(45deg)"></div>
<div class="a" style="left:27px;top:848px;width:740px;height:15px;border-radius:6px;background:linear-gradient(180deg,#a9a9a9,#bdbdbd 40%,#b9b9b9);box-shadow:inset 0 0 0 1px #a8a8a8"></div>
<div class="a" style="left:28px;top:849px;width:499px;height:13px;border-radius:5px;background:linear-gradient(180deg,#e0e0e0,#f5f4f4 45%,#dedcdc)"></div>
<div class="arrow" style="left:774px;top:853px;transform:rotate(45deg)"></div>
<div class="arrow" style="left:784px;top:853px;transform:rotate(-135deg)"></div>

<!-- right panel -->
<div class="t" style="left:823px;top:35px">Select service:</div>
<div class="btn" style="left:825px;top:55px;width:286px;height:18px;text-align:left"><span class="t" style="left:3px;top:2px">Open Street Map</span></div>
<div class="arrow" style="left:1098px;top:59px;transform:rotate(-45deg)"></div>
<div class="t" style="left:823px;top:83px">Select language:</div>
<div class="btn" style="left:972px;top:81px;width:139px;height:18px;text-align:left"><span class="t" style="left:3px;top:2px">English</span></div>
<div class="arrow" style="left:1098px;top:85px;transform:rotate(-45deg)"></div>

<div class="a" style="left:821px;top:109px;width:295px;height:665px;background:#fff;border:1px solid #bababa;border-radius:3px 3px 0 0"></div>
<div class="a" style="left:822px;top:110px;width:293px;height:19px;background:linear-gradient(#eeeeee,#e4e4e4);border-bottom:1px solid #f6f6f6"></div>
<div class="t" style="left:824px;top:113px">My Tags</div>
<div class="vl" style="left:831px;top:148px;height:526px"></div>
<div class="vl" style="left:849px;top:163px;height:414px"></div>
<div class="vl" style="left:867px;top:163px;height:8px"></div>
<div class="vl" style="left:885px;top:177px;height:7px"></div>
<div class="vl" style="left:903px;top:190px;height:8px"></div>
<div class="vl" style="left:921px;top:204px;height:7px"></div>
<div class="vl" style="left:940px;top:217px;height:8px"></div>
<div class="vl" style="left:958px;top:231px;height:7px"></div>
<div class="vl" style="left:976px;top:244px;height:8px"></div>
<div class="vl" style="left:867px;top:272px;height:197px"></div>
<div class="vl" style="left:885px;top:299px;height:7px"></div>
<div class="vl" style="left:885px;top:326px;height:7px"></div>
<div class="vl" style="left:885px;top:353px;height:7px"></div>
<div class="vl" style="left:885px;top:380px;height:8px"></div>
<div class="vl" style="left:885px;top:407px;height:21px"></div>
<div class="vl" style="left:885px;top:448px;height:7px"></div>
<div class="vl" style="left:885px;top:475px;height:7px"></div>
<div class="vl" style="left:903px;top:488px;height:8px"></div>
<div class="vl" style="left:867px;top:515px;height:8px"></div>
<div class="vl" style="left:885px;top:529px;height:7px"></div>
<div class="vl" style="left:903px;top:542px;height:8px"></div>
<div class="vl" style="left:921px;top:556px;height:8px"></div>
<div class="vl" style="left:867px;top:583px;height:8px"></div>
<div class="vl" style="left:885px;top:597px;height:7px"></div>
<div class="vl" style="left:903px;top:610px;height:8px"></div>
<div class="dash" style="left:847px;top:156px"></div>
<div class="hl" style="left:853px;top:157px;width:7px"></div>
<div class="tt red" style="left:861px;top:150px">{Country}</div>
<div class="dash" style="left:865px;top:170px"></div>
<div class="hl" style="left:871px;top:171px;width:7px"></div>
<div class="tt red" style="left:879px;top:164px">{State}</div>
<div class="dash" style="left:883px;top:183px"></div>
<div class="hl" style="left:889px;top:184px;width:7px"></div>
<div class="tt red" style="left:897px;top:177px">{County}</div>
<div class="dash" style="left:901px;top:197px"></div>
<div class="hl" style="left:907px;top:198px;width:7px"></div>
<div class="tt red" style="left:915px;top:191px">{City}</div>
<div class="dash" style="left:919px;top:210px"></div>
<div class="hl" style="left:925px;top:211px;width:7px"></div>
<div class="tt red" style="left:933px;top:204px">{Town}</div>
<div class="dash" style="left:937px;top:224px"></div>
<div class="hl" style="left:943px;top:225px;width:7px"></div>
<div class="tt red" style="left:951px;top:218px">{Village}</div>
<div class="dash" style="left:955px;top:237px"></div>
<div class="hl" style="left:961px;top:238px;width:7px"></div>
<div class="a sel" style="left:966px;top:231px;width:148px;height:14px"></div>
<div class="tt" style="left:971px;top:231px;color:#fff">{Hamlet}</div>
<div class="hl" style="left:976px;top:252px;width:10px"></div>
<div class="tt red" style="left:987px;top:245px">{Street}</div>
<div class="dash" style="left:847px;top:265px"></div>
<div class="hl" style="left:853px;top:266px;width:7px"></div>
<div class="tt grn" style="left:861px;top:259px">Romania</div>
<div class="hl" style="left:868px;top:279px;width:10px"></div>
<div class="tt grn" style="left:879px;top:272px">Nădrag</div>
<div class="dash" style="left:865px;top:292px"></div>
<div class="hl" style="left:871px;top:293px;width:7px"></div>
<div class="tt grn" style="left:879px;top:286px">Luncani</div>
<div class="hl" style="left:886px;top:306px;width:10px"></div>
<div class="tt grn" style="left:897px;top:299px">DJ668A</div>
<div class="dash" style="left:865px;top:319px"></div>
<div class="hl" style="left:871px;top:320px;width:7px"></div>
<div class="tt grn" style="left:879px;top:313px">Arad</div>
<div class="hl" style="left:886px;top:333px;width:10px"></div>
<div class="tt grn" style="left:897px;top:326px">Roșia Nouă</div>
<div class="dash" style="left:865px;top:346px"></div>
<div class="hl" style="left:871px;top:347px;width:7px"></div>
<div class="tt grn" style="left:879px;top:340px">Cârțișoara</div>
<div class="hl" style="left:886px;top:360px;width:10px"></div>
<div class="tt grn" style="left:897px;top:353px">Transfăgărășan</div>
<div class="dash" style="left:865px;top:373px"></div>
<div class="hl" style="left:871px;top:374px;width:7px"></div>
<div class="tt grn" style="left:879px;top:367px">Sibiu</div>
<div class="hl" style="left:886px;top:388px;width:10px"></div>
<div class="tt grn" style="left:897px;top:381px">Săliște</div>
<div class="dash" style="left:865px;top:400px"></div>
<div class="hl" style="left:871px;top:401px;width:7px"></div>
<div class="tt grn" style="left:879px;top:394px">Brașov</div>
<div class="hl" style="left:886px;top:415px;width:10px"></div>
<div class="tt grn" style="left:897px;top:408px">Victoria</div>
<div class="hl" style="left:886px;top:428px;width:10px"></div>
<div class="tt grn" style="left:897px;top:421px">Strada Măceșului</div>
<div class="dash" style="left:865px;top:441px"></div>
<div class="hl" style="left:871px;top:442px;width:7px"></div>
<div class="tt grn" style="left:879px;top:435px">Constanța</div>
<div class="hl" style="left:886px;top:455px;width:10px"></div>
<div class="tt grn" style="left:897px;top:448px">Studentilor</div>
<div class="dash" style="left:865px;top:468px"></div>
<div class="hl" style="left:871px;top:469px;width:7px"></div>
<div class="tt grn" style="left:879px;top:462px">Mangalia</div>
<div class="dash" style="left:883px;top:481px"></div>
<div class="hl" style="left:889px;top:482px;width:7px"></div>
<div class="tt grn" style="left:897px;top:475px">Vama Veche</div>
<div class="hl" style="left:904px;top:496px;width:10px"></div>
<div class="tt grn" style="left:915px;top:489px">Strada Falezei</div>
<div class="dash" style="left:847px;top:508px"></div>
<div class="hl" style="left:853px;top:509px;width:7px"></div>
<div class="tt grn" style="left:861px;top:502px">France</div>
<div class="dash" style="left:865px;top:522px"></div>
<div class="hl" style="left:871px;top:523px;width:7px"></div>
<div class="tt grn" style="left:879px;top:516px">Provence-Alpes-Côte-d'Azur</div>
<div class="dash" style="left:883px;top:535px"></div>
<div class="hl" style="left:889px;top:536px;width:7px"></div>
<div class="tt grn" style="left:897px;top:529px">Bouches-du-Rhône</div>
<div class="dash" style="left:901px;top:549px"></div>
<div class="hl" style="left:907px;top:550px;width:7px"></div>
<div class="tt grn" style="left:915px;top:543px">Aix-en-Provence</div>
<div class="hl" style="left:922px;top:564px;width:10px"></div>
<div class="tt grn" style="left:933px;top:557px">Rue Émile Tavant</div>
<div class="dash" style="left:847px;top:576px"></div>
<div class="hl" style="left:853px;top:577px;width:7px"></div>
<div class="tt grn" style="left:861px;top:570px">Germany</div>
<div class="dash" style="left:865px;top:590px"></div>
<div class="hl" style="left:871px;top:591px;width:7px"></div>
<div class="tt grn" style="left:879px;top:584px">North Rhine-Westphalia</div>
<div class="dash" style="left:883px;top:603px"></div>
<div class="hl" style="left:889px;top:604px;width:7px"></div>
<div class="tt grn" style="left:897px;top:597px">Düsseldorf</div>
<div class="hl" style="left:904px;top:618px;width:10px"></div>
<div class="tt grn" style="left:915px;top:611px">Düsseldorf</div>
<div class="dash" style="left:829px;top:140px"></div>
<div class="hl" style="left:835px;top:141px;width:7px"></div>
<svg class="a" style="left:842px;top:131px" width="20" height="20" viewBox="0 0 20 20"><defs><linearGradient id="tg" x1="0" y1="0" x2="0" y2="1"><stop offset="0" stop-color="#d9c77a"/><stop offset="0.35" stop-color="#f6f0d6"/><stop offset="1" stop-color="#fffef6"/></linearGradient></defs><path d="M2,18.3V5.5L6,2.3Q10,0.8 14,2.3L18,5.5V18.3Z" fill="url(#tg)" stroke="#7a704a" stroke-width="1.7" stroke-linejoin="round"/><circle cx="10" cy="3.6" r="1" fill="#fff"/></svg>
<div class="tt" style="left:868px;top:134px;color:#1e1e1e">Places</div>
<div class="hl" style="left:831px;top:634px;width:11px"></div>
<svg class="a" style="left:842px;top:625px" width="20" height="20" viewBox="0 0 20 20"><defs><linearGradient id="tg" x1="0" y1="0" x2="0" y2="1"><stop offset="0" stop-color="#d9c77a"/><stop offset="0.35" stop-color="#f6f0d6"/><stop offset="1" stop-color="#fffef6"/></linearGradient></defs><path d="M2,18.3V5.5L6,2.3Q10,0.8 14,2.3L18,5.5V18.3Z" fill="url(#tg)" stroke="#7a704a" stroke-width="1.7" stroke-linejoin="round"/><circle cx="10" cy="3.6" r="1" fill="#fff"/></svg>
<div class="tt" style="left:868px;top:627px;color:#1e1e1e">Friends</div>
<div class="hl" style="left:831px;top:654px;width:11px"></div>
<svg class="a" style="left:842px;top:645px" width="20" height="20" viewBox="0 0 20 20"><defs><linearGradient id="tg" x1="0" y1="0" x2="0" y2="1"><stop offset="0" stop-color="#d9c77a"/><stop offset="0.35" stop-color="#f6f0d6"/><stop offset="1" stop-color="#fffef6"/></linearGradient></defs><path d="M2,18.3V5.5L6,2.3Q10,0.8 14,2.3L18,5.5V18.3Z" fill="url(#tg)" stroke="#7a704a" stroke-width="1.7" stroke-linejoin="round"/><circle cx="10" cy="3.6" r="1" fill="#fff"/></svg>
<div class="tt" style="left:868px;top:647px;color:#1e1e1e">Holidays</div>
<div class="hl" style="left:831px;top:674px;width:11px"></div>
<svg class="a" style="left:842px;top:665px" width="20" height="20" viewBox="0 0 20 20"><defs><linearGradient id="tg" x1="0" y1="0" x2="0" y2="1"><stop offset="0" stop-color="#d9c77a"/><stop offset="0.35" stop-color="#f6f0d6"/><stop offset="1" stop-color="#fffef6"/></linearGradient></defs><path d="M2,18.3V5.5L6,2.3Q10,0.8 14,2.3L18,5.5V18.3Z" fill="url(#tg)" stroke="#7a704a" stroke-width="1.7" stroke-linejoin="round"/><circle cx="10" cy="3.6" r="1" fill="#fff"/></svg>
<div class="tt" style="left:868px;top:667px;color:#1e1e1e">Other</div>

<!-- tabs -->
<div class="tab" style="top:32px;height:85px"><span>Image viewer</span></div>
<div class="tab" style="top:118px;height:94px"><span>GPS Correlator</span></div>
<div class="tab" style="top:216px;height:59px"><span>Settings</span></div>
<div class="tab" style="top:276px;height:72px"><span>Undo/Redo</span></div>
<div class="tab" style="top:474px;height:53px"><span>Search</span></div>
<div class="tab" style="top:351px;height:122px;left:1127px;background:linear-gradient(90deg,#e6e6e6,#ececec);border-color:#c6c6c6"><span>Reverse Geocoding</span></div>

<div class="btn" style="left:821px;top:788px;width:294px;height:17px;line-height:17px">Less options</div>
<div class="btn" style="left:825px;top:817px;width:16px;height:16px"></div>
<svg class="a" style="left:825px;top:817px" width="16" height="16" viewBox="0 0 16 16"><path d="M3.5,8.5L6.5,11.8L12.5,4" fill="none" stroke="#222" stroke-width="1.5"/></svg>
<div class="t" style="left:847px;top:818px">Write tags to XMP</div>
<div class="btn" style="left:821px;top:846px;width:294px;height:16px;line-height:16px">Apply reverse geocoding</div>
<div class="btn" style="left:987px;top:870px;width:74px;height:18px;line-height:18px;padding-left:18px"><u>A</u>pply</div>
<svg class="a" style="left:997px;top:871px" width="17" height="16" viewBox="0 0 17 16"><path d="M1.5,8.5L6,13L15.5,3.5L13.8,2L6,9.8L3.2,7Z" fill="#5cb54a" stroke="#3e8a30" stroke-width="0.7"/></svg>
<div class="btn" style="left:1070px;top:870px;width:74px;height:18px;line-height:18px;padding-left:18px"><u>C</u>lose</div>
<svg class="a" style="left:1081px;top:871px" width="16" height="16" viewBox="0 0 16 16"><defs><radialGradient id="cr" cx="0.45" cy="0.4" r="0.6"><stop offset="0" stop-color="#ff7a6a"/><stop offset="1" stop-color="#c01a12"/></radialGradient></defs><circle cx="8" cy="8" r="6.8" fill="url(#cr)" stroke="#8a1410" stroke-width="0.6"/><path d="M5.2,5.2L10.8,10.8M10.8,5.2L5.2,10.8" stroke="#fff" stroke-width="1.8"/></svg>
</body></html>
